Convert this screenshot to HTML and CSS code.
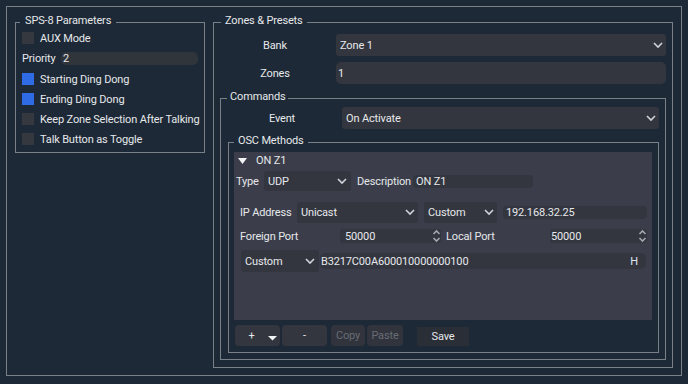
FILE: index.html
```html
<!DOCTYPE html>
<html>
<head>
<meta charset="utf-8">
<link rel="stylesheet" href="styles.css">
</head>
<body>
<div class="frame">
  <section class="group g-sps">
    <div class="title">SPS-8 Parameters</div>
    <div class="check-row"><span class="box"></span>AUX Mode</div>
    <div class="prio-row"><span class="prio-label">Priority</span><span class="prio-field">2</span></div>
    <div class="check-row"><span class="box on"></span>Starting Ding Dong</div>
    <div class="check-row"><span class="box on"></span>Ending Ding Dong</div>
    <div class="check-row"><span class="box"></span>Keep Zone Selection After Talking</div>
    <div class="check-row"><span class="box"></span>Talk Button as Toggle</div>
  </section>

  <section class="group g-zones">
    <div class="title">Zones &amp; Presets</div>
    <div class="form-row r-bank">
      <span class="flabel">Bank</span>
      <div class="combo grow"><span>Zone 1</span><svg class="chev" width="10" height="7" viewBox="0 0 10 7"><polyline points="1,1 5,5 9,1"/></svg></div>
    </div>
    <div class="form-row r-zones">
      <span class="flabel">Zones</span>
      <div class="field grow zones-field">1</div>
    </div>

    <section class="group g-cmd">
      <div class="title">Commands</div>
      <div class="form-row r-event">
        <span class="flabel ev-label">Event</span>
        <div class="combo grow"><span>On Activate</span><svg class="chev" width="10" height="7" viewBox="0 0 10 7"><polyline points="1,1 5,5 9,1"/></svg></div>
      </div>

      <section class="group g-osc">
        <div class="title">OSC Methods</div>
        <div class="panel">
          <div class="tree-row">
            <svg class="tri" width="9" height="6" viewBox="0 0 9 6"><polygon points="0,0 9,0 4.5,6"/></svg>
            <span>ON Z1</span>
          </div>
          <div class="type-row">
            <span class="type-label">Type</span>
            <div class="combo type-combo"><span>UDP</span><svg class="chev" width="10" height="7" viewBox="0 0 10 7"><polyline points="1,1 5,5 9,1"/></svg></div>
            <span class="desc-label">Description</span>
            <div class="field small desc-field">ON Z1</div>
          </div>
          <div class="sub">
            <div class="ip-row">
              <span class="ip-label">IP Address</span>
              <div class="combo ip-combo"><span>Unicast</span><svg class="chev" width="10" height="7" viewBox="0 0 10 7"><polyline points="1,1 5,5 9,1"/></svg></div>
              <div class="combo cust-combo"><span>Custom</span><svg class="chev" width="10" height="7" viewBox="0 0 10 7"><polyline points="1,1 5,5 9,1"/></svg></div>
              <div class="field small ip-field">192.168.32.25</div>
            </div>
            <div class="port-row">
              <span class="fport-label">Foreign Port</span>
              <div class="spin fport"><span>50000</span><svg class="arrows" width="9" height="14" viewBox="0 0 9 14"><polyline points="1.5,5 4.5,2 7.5,5"/><polyline points="1.5,9 4.5,12 7.5,9"/></svg></div>
              <span class="lport-label">Local Port</span>
              <div class="spin lport"><span>50000</span><svg class="arrows" width="9" height="14" viewBox="0 0 9 14"><polyline points="1.5,5 4.5,2 7.5,5"/><polyline points="1.5,9 4.5,12 7.5,9"/></svg></div>
            </div>
            <div class="hex-row">
              <div class="combo hex-combo"><span>Custom</span><svg class="chev" width="10" height="7" viewBox="0 0 10 7"><polyline points="1,1 5,5 9,1"/></svg></div>
              <div class="field hex-field"><span>B3217C00A600010000000100</span><span class="h">H</span></div>
            </div>
          </div>
        </div>
        <div class="btn-row">
          <div class="btn plus">+<svg class="plus-tri" width="9" height="5" viewBox="0 0 9 5"><polygon points="0,0 9,0 4.5,4.5"/></svg></div>
          <div class="btn minus">-</div>
          <div class="btn dis copy">Copy</div>
          <div class="btn dis paste">Paste</div>
          <div class="btn save">Save</div>
        </div>
      </section>
    </section>
  </section>
</div>
</body>
</html>
```
FILE: styles.css
```css
* { box-sizing: border-box; }
html, body { margin: 0; }
body {
  width: 688px;
  height: 384px;
  overflow: hidden;
  background: #1d2936;
  font-family: Roboto, "Liberation Sans", sans-serif;
  font-size: 11px;
  letter-spacing: -0.15px;
  color: #e6e8eb;
  white-space: nowrap;
}
.frame {
  margin: 6px;
  width: 676px;
  height: 370px;
  border: 1px solid #7a8087;
  display: flex;
  align-items: flex-start;
  gap: 8px;
  padding: 15px 8px 7px 8px;
}
.group {
  border: 1px solid #7a8087;
  display: flex;
  flex-direction: column;
  min-width: 0;
}
.title {
  align-self: flex-start;
  line-height: 14px;
  margin-top: -9px;
  padding: 0 4px;
  background: #1d2936;
}

/* left group */
.g-sps {
  width: 190px;
  flex: none;
  padding: 0 6px 3px 6px;
}
.g-sps .title { margin-left: -2px; padding: 0 5px; }
.check-row {
  height: 20px;
  display: flex;
  align-items: center;
  gap: 6px;
}
.box {
  width: 12px;
  height: 12px;
  background: #35383f;
  flex: none;
}
.box.on { background: #2e6be4; }
.prio-row {
  height: 21px;
  display: flex;
  align-items: center;
}
.prio-label { width: 39px; }
.prio-field {
  width: 137px;
  height: 13px;
  line-height: 13px;
  background: #30343b;
  border-radius: 5px;
  padding-left: 2px;
}

/* zones group */
.g-zones {
  flex: 1;
  align-self: stretch;
  padding: 0 6px 7px 6px;
}
.g-zones > .title { margin-left: 1px; }
.form-row {
  display: flex;
  align-items: center;
  gap: 6px;
  flex: none;
}
.flabel {
  width: 110px;
  text-align: center;
}
.grow { flex: 1; }
.r-bank { margin-top: 6px; height: 22px; }
.r-zones { margin-top: 6px; height: 22px; }
.combo {
  height: 22px;
  display: flex;
  align-items: center;
  justify-content: space-between;
  background: #33363f;
  border-radius: 3px;
  padding: 0 3px 0 4px;
}
.chev {
  fill: none;
  stroke: #cfd2d7;
  stroke-width: 1.6;
  flex: none;
}
.field {
  background: #33363f;
  border-radius: 4px;
  display: flex;
  align-items: center;
}
.zones-field { height: 22px; padding-left: 2px; border-radius: 5px; }

/* commands */
.g-cmd {
  flex: 1;
  margin-top: 14px;
  padding: 0 6px 6px 7px;
}
.g-cmd > .title { margin-left: -1px; padding: 0 3px; }
.r-event { margin-top: 3px; height: 22px; }
.ev-label { width: 108px; }

/* osc */
.g-osc {
  flex: 1;
  margin-top: 13px;
  padding: 0 6px 6px 5px;
}
.g-osc > .title { margin-left: 0; }
.panel {
  flex: 1;
  margin-top: 4px;
  background: #3b3e4a;
  display: flex;
  flex-direction: column;
}
.tree-row {
  height: 17px;
  display: flex;
  align-items: center;
  padding-left: 4px;
}
.tri { fill: #f2f3f5; margin-right: 9px; }
.type-row {
  margin-top: 2px;
  height: 20px;
  display: flex;
  align-items: center;
  padding-left: 2px;
}
.type-label { width: 28px; }
.type-combo { width: 87px; height: 20px; padding-right: 4px; }
.desc-label { margin-left: 6px; width: 56px; }
.small { height: 13px; padding-left: 3px; }
.desc-field { width: 120px; }
.sub {
  margin-top: 11px;
  padding-left: 6px;
  display: flex;
  flex-direction: column;
}
.ip-row {
  height: 21px;
  display: flex;
  align-items: center;
}
.ip-label { width: 57px; }
.ip-combo { width: 121px; height: 21px; }
.cust-combo { width: 73px; height: 21px; margin-left: 6px; }
.ip-field { width: 144px; margin-left: 6px; }
.port-row {
  margin-top: 2px;
  height: 22px;
  display: flex;
  align-items: center;
}
.fport-label { width: 100px; }
.lport-label { margin-left: 5px; width: 104px; }
.spin {
  height: 14px;
  background: #33363f;
  border-radius: 3px;
  display: flex;
  align-items: center;
  justify-content: space-between;
}
.fport { width: 101px; padding-left: 5px; }
.lport { width: 97px; padding-left: 1px; }
.arrows {
  fill: none;
  stroke: #a4a7ad;
  stroke-width: 1.6;
  flex: none;
}
.hex-row {
  margin-top: 3px;
  height: 22px;
  display: flex;
  align-items: center;
}
.hex-combo { width: 78px; height: 22px; margin-left: 1px; padding-right: 4px; }
.hex-field {
  width: 326px;
  height: 16px;
  margin-left: 1px;
  padding: 0 8px 0 1px;
  justify-content: space-between;
  border-radius: 5px;
}
.h { color: #dfe6f0; }

/* buttons */
.btn-row {
  margin-top: 5px;
  height: 21px;
  display: flex;
  flex: none;
}
.btn {
  height: 21px;
  background: #33363f;
  border-radius: 4px;
  display: flex;
  align-items: center;
  justify-content: center;
}
.plus {
  width: 45px;
  margin-left: 1px;
  position: relative;
  padding-right: 12px;
}
.plus-tri {
  position: absolute;
  right: 3px;
  bottom: 5px;
  fill: #f2f3f5;
}
.minus { width: 45px; margin-left: 2px; }
.dis { color: #686c75; background: #31343c; }
.copy { width: 34px; margin-left: 4px; }
.paste { width: 36px; margin-left: 2px; }
.save {
  width: 52px;
  height: 19px;
  margin-left: 14px;
  margin-top: 2px;
  background: #2a2e36;
  border-radius: 0;
}
```
